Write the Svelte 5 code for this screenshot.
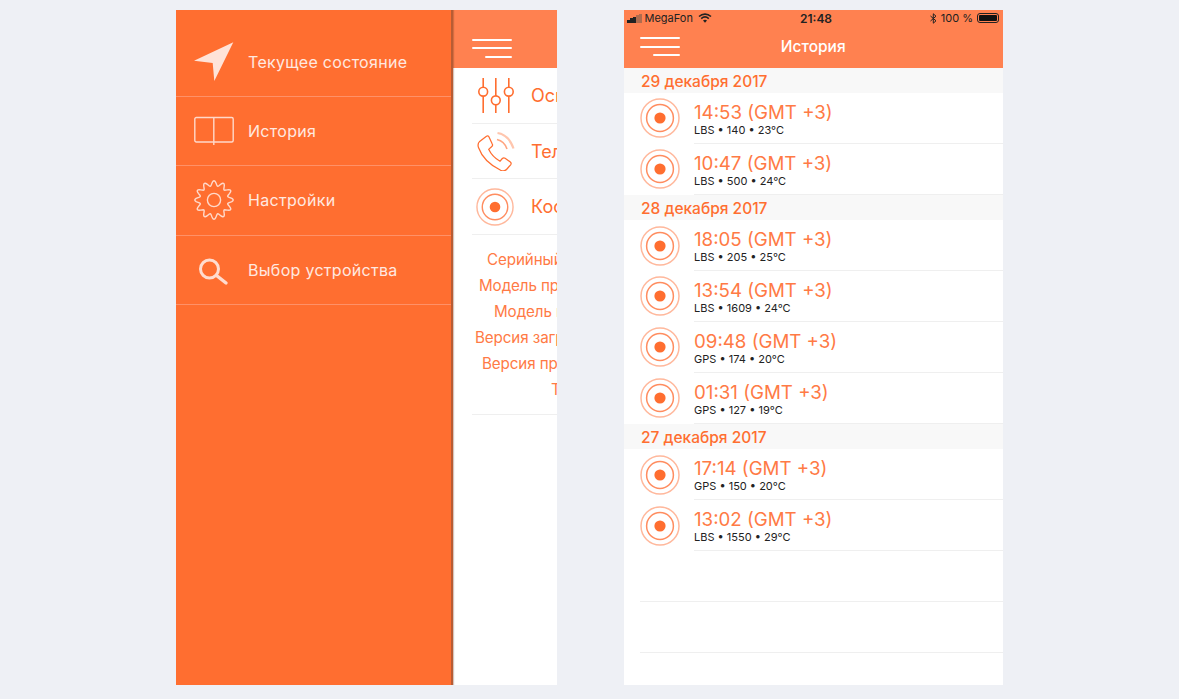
<script>
  const menu = [
    { id: 'nav', label: 'Текущее состояние' },
    { id: 'book', label: 'История' },
    { id: 'gear', label: 'Настройки' },
    { id: 'search', label: 'Выбор устройства' }
  ];

  // offsets keep the clipped, centred lines where they fall on the screen
  const info = [
    { text: 'Серийный номер', left: 34 },
    { text: 'Модель процессора', left: 26 },
    { text: 'Модель изделия', left: 41 },
    { text: 'Версия загрузчика', left: 22 },
    { text: 'Версия прошивки', left: 29 },
    { text: 'Тип', left: 98 }
  ];

  const history = [
    {
      date: '29 декабря 2017',
      rows: [
        { time: '14:53 (GMT +3)', meta: 'LBS • 140 • 23°C' },
        { time: '10:47 (GMT +3)', meta: 'LBS • 500 • 24°C' }
      ]
    },
    {
      date: '28 декабря 2017',
      rows: [
        { time: '18:05 (GMT +3)', meta: 'LBS • 205 • 25°C' },
        { time: '13:54 (GMT +3)', meta: 'LBS • 1609 • 24°C' },
        { time: '09:48 (GMT +3)', meta: 'GPS • 174 • 20°C' },
        { time: '01:31 (GMT +3)', meta: 'GPS • 127 • 19°C' }
      ]
    },
    {
      date: '27 декабря 2017',
      rows: [
        { time: '17:14 (GMT +3)', meta: 'GPS • 150 • 20°C' },
        { time: '13:02 (GMT +3)', meta: 'LBS • 1550 • 29°C' }
      ]
    }
  ];

  // gear outline: a wavy ring with 12 teeth
  const gearPath = (() => {
    const pts = [];
    for (let i = 0; i < 144; i++) {
      const a = (i / 144) * Math.PI * 2;
      const r = 16.7 + 2.5 * Math.cos(a * 12);
      pts.push(`${(20 + r * Math.cos(a)).toFixed(2)} ${(20 + r * Math.sin(a)).toFixed(2)}`);
    }
    return `M${pts.join('L')}Z`;
  })();
</script>

{#snippet burger()}
  <div class="burger">
    <span></span>
    <span></span>
    <span class="short"></span>
  </div>
{/snippet}

{#snippet target(size)}
  <svg class="target" width={size} height={size} viewBox="0 0 40 40">
    <circle cx="20" cy="20" r="19" fill="none" stroke="#ffb89c" stroke-width="1.5" />
    <circle cx="20" cy="20" r="13.4" fill="none" stroke="#ff8d60" stroke-width="1.5" />
    <circle cx="20" cy="20" r="5.6" fill="#ff6e30" />
  </svg>
{/snippet}

<main class="page">
  <section class="phone left">
    <nav class="drawer">
      {#each menu as item, i}
        <div class="menu-row" class:first={i === 0}>
          <div class="menu-icon">
            {#if item.id === 'nav'}
              <svg width="40" height="40" viewBox="0 0 40 40">
                <path d="M0 18.700 39.300.3 20.300 39 18.700 21Z" fill="#ffe3d8" />
              </svg>
            {:else if item.id === 'book'}
              <svg width="40" height="30" viewBox="0 0 40 30" fill="none" stroke="#ffd9ca" stroke-width="1.4">
                <rect x="0.8" y="1.500" width="38.400" height="24.500" rx="1.500" />
                <path d="M19.800 1.500V29" />
              </svg>
            {:else if item.id === 'gear'}
              <svg width="40" height="40" viewBox="0 0 40 40" fill="none" stroke="#ffd9ca" stroke-width="1.4">
                <path d={gearPath} />
                <circle cx="20" cy="20" r="6.600" />
              </svg>
            {:else}
              <svg width="40" height="40" viewBox="0 0 40 40" fill="none" stroke="#ffdccf">
                <circle cx="15.500" cy="19" r="9" stroke-width="3" />
                <path d="M22.500 25.500 32 33" stroke-width="3.400" stroke-linecap="round" />
              </svg>
            {/if}
          </div>
          <span class="menu-label">{item.label}</span>
        </div>
      {/each}
    </nav>

    <div class="panel">
      <header class="panel-head">
        {@render burger()}
      </header>
      <div class="panel-row">
        <svg class="panel-icon" width="40" height="40" viewBox="0 0 40 40" fill="none" stroke="#ff6e30" stroke-width="1.6">
          <path d="M8.200 2V11.300M8.200 20.100V37M20.800 2V20M20.800 28.700V37M33.800 2V11.300M33.800 20.100V37" />
          <circle cx="8.200" cy="15.700" r="4.400" />
          <circle cx="20.800" cy="24.300" r="4.400" />
          <circle cx="33.800" cy="15.700" r="4.400" />
        </svg>
        <span class="panel-label">Основные</span>
      </div>
      <div class="panel-row short-row">
        <svg class="panel-icon" width="40" height="40" viewBox="0 0 40 40" fill="none">
          <path transform="translate(1.500 1.500) scale(1.050)" d="M9.500 3.500 3 8.500C1.500 10 1 12 2 14.500 5 23 13 31 23 36c2.500 1 4.500.5 5.800-1l3.700-4.200c.8-1 .6-2-.3-2.700l-5-3.600c-1-.7-1.800-.5-2.600.3l-2.200 2.600c-4.500-2.500-8.500-6.500-10.800-11.400l3-2.600c.8-.7.9-1.600.4-2.500l-3.200-6.800c-.5-1-1.400-1.200-2.300-.6Z" stroke="#ff6e30" stroke-width="1.200" />
          <path d="M22 8.500c4.500 1 8.500 5 10 9.500" stroke="#ffa581" stroke-width="1.600" />
          <path d="M22.500 2c7 1 13 7 16 15.500" stroke="#ffc6ae" stroke-width="2.200" />
        </svg>
        <span class="panel-label">Телефон</span>
      </div>
      <div class="panel-row">
        <div class="panel-icon">{@render target(38)}</div>
        <span class="panel-label">Космос</span>
      </div>
      <div class="info">
        {#each info as line}
          <div class="info-line" style="padding-left: {line.left}px">{line.text}</div>
        {/each}
      </div>
    </div>
  </section>

  <section class="phone right">
    <header class="app-head">
      <div class="status">
        <div class="status-side">
          <span class="signal"><i></i><i></i><i></i><i class="off"></i><i class="off"></i></span>
          <span>MegaFon</span>
          <svg class="wifi" width="14" height="10" viewBox="0 0 14 10" fill="none" stroke="#222" stroke-width="1.600">
            <path d="M1 3.500C4.500 .3 9.500 .3 13 3.500M3.200 5.600c2.300-2 5.300-2 7.600 0" />
            <path d="M7 9.800 5 7.400c1.200-1 2.800-1 4 0Z" fill="#222" stroke="none" />
          </svg>
        </div>
        <strong class="clock">21:48</strong>
        <div class="status-side end">
          <svg width="7" height="11" viewBox="0 0 7 11" fill="none" stroke="#222" stroke-width="1">
            <path d="M.5 3 6 7.800 3.300 10.200V.8L6 3.200.5 8" />
          </svg>
          <span>100 %</span>
          <span class="battery"><span></span></span>
        </div>
      </div>
      <div class="app-bar">
        {@render burger()}
        <h1>История</h1>
      </div>
    </header>

    {#each history as group}
      <div class="day">{group.date}</div>
      {#each group.rows as row}
        <div class="entry">
          <div class="entry-icon">{@render target(40)}</div>
          <div class="entry-body">
            <div class="entry-time">{row.time}</div>
            <div class="entry-meta">{row.meta}</div>
          </div>
        </div>
      {/each}
    {/each}
    <div class="blank"></div>
    <div class="blank"></div>
  </section>
</main>

<style>
  :global(body) {
    margin: 0;
    background: #eef0f5;
  }

  .page {
    display: flex;
    gap: 67px;
    width: 1179px;
    height: 699px;
    box-sizing: border-box;
    padding: 10px 0 0 176px;
    overflow: hidden;
    font-family: Inter, "Noto Sans", sans-serif;
  }

  .phone {
    height: 675px;
    background: #fff;
    overflow: hidden;
  }

  .left {
    display: flex;
    width: 381px;
  }

  .right {
    width: 379px;
  }

  /* Drawer */
  .drawer {
    flex: none;
    width: 277px;
    box-sizing: border-box;
    background: #ff6e30;
    border-right: 2px solid #b85c34;
    box-shadow: 1px 0 1px rgba(120, 60, 30, 0.3);
    z-index: 1;
  }

  .menu-row {
    display: flex;
    align-items: center;
    gap: 14px;
    height: 69.200px;
    padding-left: 18px;
    border-bottom: 1px solid #ff9168;
    box-sizing: border-box;
  }

  .menu-row.first {
    height: 87.200px;
    padding-top: 18px;
  }

  .menu-icon {
    display: flex;
    justify-content: center;
    width: 40px;
  }

  .menu-label {
    font-size: 16px;
    letter-spacing: 0.3px;
    color: #ffe9e0;
  }

  /* Panel behind the drawer */
  .panel {
    flex: 1;
    min-width: 0;
    overflow: hidden;
    white-space: nowrap;
  }

  .panel-head {
    display: flex;
    align-items: center;
    height: 58px;
    padding: 0 0 0 19px;
    background: #ff8150;
    box-sizing: border-box;
  }

  .panel-head .burger {
    margin-top: 18px;
  }

  .burger {
    display: flex;
    flex-direction: column;
    gap: 6.500px;
    align-items: flex-end;
    width: 39.500px;
  }

  .burger span {
    display: block;
    width: 100%;
    height: 2px;
    background: #fff;
    border-radius: 1px;
  }

  .burger .short {
    width: 27px;
  }

  .panel-row {
    display: flex;
    align-items: center;
    gap: 14px;
    height: 56px;
    margin-left: 19px;
    border-bottom: 1px solid #efefef;
    box-sizing: border-box;
  }

  .short-row {
    height: 55px;
  }

  .panel-icon {
    display: flex;
    flex: none;
    justify-content: center;
    width: 45px;
  }

  svg.panel-icon {
    width: 40px;
    margin: 0 2.500px;
  }

  .panel-label {
    font-size: 18px;
    color: #ff6e30;
  }

  .info {
    height: 180px;
    margin-left: 19px;
    padding-top: 11.500px;
    border-bottom: 1px solid #efefef;
    box-sizing: border-box;
  }

  .info-line {
    margin-left: -19px;
    height: 26.200px;
    line-height: 26.200px;
    font-size: 15.200px;
    letter-spacing: -0.1px;
    color: #ff7a45;
  }

  /* History screen */
  .app-head {
    height: 57.500px;
    background: #ff8150;
  }

  .status {
    display: flex;
    align-items: center;
    justify-content: space-between;
    position: relative;
    height: 16px;
    padding: 0 4px 0 3px;
    font-size: 11px;
    color: #222;
  }

  .status-side {
    display: flex;
    align-items: center;
    gap: 3px;
  }

  .status-side.end {
    gap: 4px;
  }

  .wifi {
    margin-left: 2px;
  }

  .signal {
    display: flex;
    align-items: flex-end;
    gap: 0.500px;
    height: 9px;
  }

  .signal i {
    width: 2.500px;
    background: #222;
  }

  .signal i:nth-child(1) { height: 3px; }
  .signal i:nth-child(2) { height: 5px; }
  .signal i:nth-child(3) { height: 6px; }
  .signal i:nth-child(4) { height: 8px; }
  .signal i:nth-child(5) { height: 9px; }

  .signal i.off {
    background: #b06b4d;
  }

  .clock {
    position: absolute;
    left: 176px;
    font-size: 12px;
    font-weight: 600;
  }

  .battery {
    display: block;
    width: 22px;
    height: 10px;
    padding: 1px;
    border: 1px solid #222;
    border-radius: 3px;
    box-sizing: border-box;
  }

  .battery span {
    display: block;
    height: 100%;
    background: #111;
    border-radius: 1px;
  }

  .app-bar {
    position: relative;
    display: flex;
    align-items: center;
    height: 41px;
    padding-left: 16px;
  }

  .app-bar h1 {
    flex: 1;
    margin: 0 0 0 -56px;
    text-align: center;
    font-size: 15.500px;
    font-weight: 500;
    color: #fff;
  }

  .day {
    height: 25.500px;
    padding-left: 17px;
    line-height: 28px;
    background: #f8f8f8;
    font-size: 15.500px;
    font-weight: 500;
    color: #ff6e30;
  }

  .entry {
    display: flex;
    height: 50.900px;
  }

  .entry-icon {
    display: flex;
    flex: none;
    align-items: center;
    justify-content: center;
    width: 72px;
    height: 50.600px;
    margin-right: -2px;
  }

  .entry-body {
    flex: 1;
    padding-top: 10px;
    border-bottom: 1px solid #efefef;
    box-sizing: border-box;
  }

  .entry-time {
    font-size: 18.700px;
    line-height: 20px;
    color: #ff7a45;
  }

  .entry-meta {
    font-size: 11px;
    line-height: 14px;
    color: #222;
  }

  .blank {
    height: 50.900px;
    margin-left: 16px;
    border-bottom: 1px solid #efefef;
    box-sizing: border-box;
  }
</style>
